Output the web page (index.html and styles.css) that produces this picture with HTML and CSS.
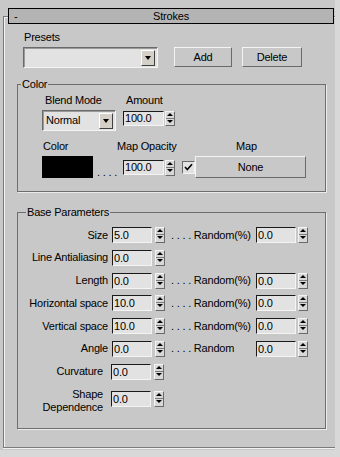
FILE: index.html
```html
<!DOCTYPE html>
<html lang="en">
<head>
  <meta charset="UTF-8">
  <meta name="viewport" content="width=device-width, initial-scale=1.0">
  <title>Strokes</title>
  <link rel="stylesheet" href="styles.css">
</head>
<body>
  <div class="panel">
    <div class="rollout">
      <!-- Rollout header -->
      <div class="rollout-title">
        <span class="rollout-toggle">-</span>
        <span class="rollout-name">Strokes</span>
        <span></span>
      </div>

      <!-- Presets -->
      <div class="presets">
        <div class="presets-pick">
          <div class="label presets-label">Presets</div>
          <div class="combo combo-presets">
            <span class="combo-text"></span>
            <span class="combo-btn"></span>
          </div>
        </div>
        <button class="btn btn-add">Add</button>
        <button class="btn btn-delete">Delete</button>
      </div>

      <!-- Color group -->
      <fieldset class="group group-color">
        <legend>Color</legend>
        <div class="color-row color-labels">
          <span class="lbl-blend">Blend Mode</span>
          <span>Amount</span>
        </div>
        <div class="color-row color-controls">
          <div class="combo combo-blend">
            <span class="combo-text">Normal</span>
            <span class="combo-btn"></span>
          </div>
          <span class="field field-amount">100.0</span>
          <span class="spin"></span>
        </div>
        <div class="color-row color-labels2">
          <span class="lbl-color">Color</span>
          <span class="lbl-opacity">Map Opacity</span>
          <span>Map</span>
        </div>
        <div class="color-row color-map">
          <span class="swatch"></span>
          <span class="dots">. . . .</span>
          <span class="field field-amount field-opacity">100.0</span>
          <span class="spin spin-opacity"></span>
          <span class="check">
            <svg width="11" height="11" viewBox="0 0 11 11"><path d="M2 5 L4.3 7.5 L9 2.3" fill="none" stroke="#000" stroke-width="1.6"/></svg>
          </span>
          <button class="btn btn-map">None</button>
        </div>
      </fieldset>

      <!-- Base parameters group -->
      <fieldset class="group group-base">
        <legend>Base Parameters</legend>
        <div class="param-list">
          <div class="param">
            <span class="param-label">Size</span>
            <span class="field">5.0</span>
            <span class="spin"></span>
            <span class="param-mid">. . . .&nbsp;Random(%)</span>
            <span class="field">0.0</span>
            <span class="spin spin-right"></span>
          </div>
          <div class="param">
            <span class="param-label">Line Antialiasing</span>
            <span class="field">0.0</span>
            <span class="spin"></span>
          </div>
          <div class="param">
            <span class="param-label">Length</span>
            <span class="field">0.0</span>
            <span class="spin"></span>
            <span class="param-mid">. . . .&nbsp;Random(%)</span>
            <span class="field">0.0</span>
            <span class="spin spin-right"></span>
          </div>
          <div class="param">
            <span class="param-label">Horizontal space</span>
            <span class="field">10.0</span>
            <span class="spin"></span>
            <span class="param-mid">. . . .&nbsp;Random(%)</span>
            <span class="field">0.0</span>
            <span class="spin spin-right"></span>
          </div>
          <div class="param">
            <span class="param-label">Vertical space</span>
            <span class="field">10.0</span>
            <span class="spin"></span>
            <span class="param-mid">. . . .&nbsp;Random(%)</span>
            <span class="field">0.0</span>
            <span class="spin spin-right"></span>
          </div>
          <div class="param">
            <span class="param-label">Angle</span>
            <span class="field">0.0</span>
            <span class="spin"></span>
            <span class="param-mid">. . . .&nbsp;Random</span>
            <span class="field">0.0</span>
            <span class="spin spin-right"></span>
          </div>
          <div class="param">
            <span class="param-label param-label-short">Curvature</span>
            <span class="field">0.0</span>
            <span class="spin"></span>
          </div>
          <div class="param param-tall">
            <span class="param-label param-label-short">Shape<br>Dependence</span>
            <span class="field">0.0</span>
            <span class="spin"></span>
          </div>
        </div>
      </fieldset>
    </div>
  </div>
</body>
</html>
```

FILE: styles.css
```css
* {
  box-sizing: border-box;
}

body {
  margin: 0;
  background: #d8d8d8;
  font-family: "Liberation Sans", Arial, sans-serif;
  font-size: 11px;
  line-height: 13px;
  letter-spacing: -0.2px;
  color: #000;
}

.panel {
  width: 335px;
  height: 450px;
  padding-top: 16px;
  background: #c8c8c8;
  overflow: hidden;
}

/* Rollout frame */
.rollout {
  margin-left: 3px;
  width: 332px;
  height: 432px;
  border: 1px solid #7a7a7a;
  border-right: 0;
  box-shadow: inset 1px 1px 0 #f2f2f2, 0 1px 0 #f2f2f2;
}

.rollout-title {
  display: grid;
  grid-template-columns: 20px 1fr 20px;
  align-items: center;
  margin: -9px 0 0 4px;
  width: 326px;
  height: 16px;
  border: 1px solid #000;
  background: #b4b4b4;
}

.rollout-toggle {
  padding-left: 5px;
}

.rollout-name {
  text-align: center;
}

/* Presets */
.presets {
  display: flex;
  align-items: flex-end;
  margin: 7px 0 0 19px;
}

.presets-label {
  padding-left: 1px;
  margin-bottom: 3px;
}

.combo {
  display: flex;
  justify-content: space-between;
  align-items: center;
  height: 21px;
  padding: 1px 2px 1px 3px;
  border: 1px solid;
  border-color: #6a6a6a #f4f4f4 #f4f4f4 #6a6a6a;
  box-shadow: inset 1px 1px 0 #9a9a9a;
  background: #e2e2e2;
}

.combo-presets {
  width: 135px;
}

.combo-btn {
  position: relative;
  width: 14px;
  height: 16px;
  background: #d4d0c8;
  border: 1px solid;
  border-color: #fff #404040 #404040 #fff;
}

.combo-btn::after {
  content: "";
  position: absolute;
  left: 3px;
  top: 5px;
  border-left: 3.5px solid transparent;
  border-right: 3.5px solid transparent;
  border-top: 4px solid #000;
}

.btn {
  height: 20px;
  margin-bottom: 1px;
  padding: 0;
  font: inherit;
  letter-spacing: inherit;
  color: #000;
  background: #c8c8c8;
  border: 1px solid;
  border-color: #f4f4f4 #6a6a6a #6a6a6a #f4f4f4;
}

.btn-add {
  width: 58px;
  margin-left: 16px;
}

.btn-delete {
  width: 60px;
  margin-left: 10px;
}

/* Group boxes */
.group {
  margin: 0 0 0 13px;
  width: 309px;
  padding: 0;
  border: 1px solid #6e6e6e;
  box-shadow: 1px 1px 0 #ececec;
}

.group legend {
  padding: 0 1px;
}

.group-color {
  margin-top: 10px;
  padding-top: 3px;
  padding-bottom: 12px;
}

.group-color legend {
  margin-left: 3px;
}

.color-row {
  display: flex;
  align-items: flex-start;
}

.color-labels {
  padding-left: 27px;
}

.lbl-blend {
  width: 81px;
}

.color-controls {
  margin-top: 3px;
  padding-left: 24px;
}

.combo-blend {
  width: 74px;
}

.field {
  display: block;
  width: 40px;
  height: 16px;
  padding: 1px 0 0 1px;
  border: 1px solid;
  border-color: #1a1a1a #f4f4f4 #f4f4f4 #1a1a1a;
  background: #e2e2e2;
  line-height: 12px;
}

.field-amount {
  width: 41px;
  height: 15px;
  padding-top: 0;
  margin: 1px 0 0 7px;
}

.spin {
  display: block;
  position: relative;
  width: 10px;
  height: 16px;
  margin-left: 3px;
  border: 1px solid;
  border-color: #f4f4f4 #6a6a6a #6a6a6a #f4f4f4;
  background: linear-gradient(#d8d8d8 6px, #7a7a7a 6px, #7a7a7a 7px, #d8d8d8 7px);
}

.color-controls .spin {
  height: 15px;
  margin: 1px 0 0 1px;
}

.spin::before,
.spin::after {
  content: "";
  position: absolute;
  left: 1px;
  border-left: 3px solid transparent;
  border-right: 3px solid transparent;
}

.spin::before {
  top: 1px;
  border-bottom: 3px solid #000;
}

.spin::after {
  top: 8px;
  border-top: 3px solid #000;
}

.color-labels2 {
  margin-top: 9px;
  padding-left: 25px;
}

.lbl-color {
  width: 74px;
}

.lbl-opacity {
  width: 119px;
}

.color-map {
  margin-top: 3px;
  padding-left: 24px;
}

.swatch {
  width: 51px;
  height: 22px;
  background: #000;
}

.dots {
  width: 30px;
  padding: 10px 0 0 4px;
}

.field-opacity {
  margin: 4px 0 0 0;
}

.color-map .spin-opacity {
  margin: 4px 0 0 1px;
}

.check {
  display: block;
  width: 13px;
  height: 13px;
  margin: 5px 0 0 7px;
  border: 1px solid;
  border-color: #6a6a6a #f4f4f4 #f4f4f4 #6a6a6a;
  background: #e2e2e2;
}

.check svg {
  display: block;
}

.btn-map {
  width: 111px;
  height: 22px;
  margin: 0;
}

/* Base parameters */
.group-base {
  margin-top: 14px;
  height: 223px;
}

.group-base legend {
  margin-left: 8px;
}

.param-list {
  display: flex;
  flex-direction: column;
  gap: 6.8px;
  padding-top: 8px;
}

.param {
  display: flex;
  align-items: center;
  height: 16px;
}

.param-label {
  width: 94px;
  padding-right: 4px;
  text-align: right;
}

.param-label-short {
  width: 93px;
  padding-right: 8px;
}

.param-mid {
  width: 91px;
  padding-left: 6px;
}

.param .spin-right {
  margin-left: 2px;
}

.param-tall {
  align-items: flex-start;
  height: 27px;
}

.param-tall .param-label {
  margin-top: 1px;
}

.param-tall .field,
.param-tall .spin {
  margin-top: 4px;
}
```
